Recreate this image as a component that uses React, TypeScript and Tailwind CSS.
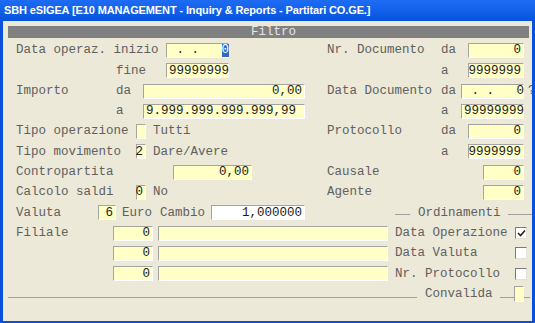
import React from 'react';

const mono = { fontFamily: '"Liberation Mono", "Courier New", monospace' };

function Field({ w, value = "", align = "right", white = false }: { w: string; value?: React.ReactNode; align?: "left" | "right"; white?: boolean }) {
  return (
    <div
      className={`${w} h-[15px] shrink-0 border-t border-l border-t-[#a6a59d] border-l-[#a6a59d] border-b border-r border-b-white border-r-white px-[2px] flex items-center whitespace-pre text-[#1c1c1c] leading-none ${align === "right" ? "justify-end" : "justify-start"} ${white ? "bg-white" : "bg-[#ffffc6]"}`}
    >
      {value}
    </div>
  );
}

function Lbl({ w, children }: { w: string; children?: React.ReactNode }) {
  return <div className={`${w} shrink-0 whitespace-pre text-[#606060] leading-none`}>{children}</div>;
}

function Check({ on = false }: { on?: boolean }) {
  return (
    <div className="w-[12px] h-[12px] shrink-0 bg-white border-t border-l border-t-[#7b7b7b] border-l-[#7b7b7b] border-b border-r border-b-[#e4e2d8] border-r-[#e4e2d8] flex items-center justify-center">
      {on && (
        <svg width="9" height="9" viewBox="0 0 9 9">
          <path d="M1 4 L3.5 6.5 L8 1.5" fill="none" stroke="#222" strokeWidth="1.6" />
        </svg>
      )}
    </div>
  );
}

export default function App() {
  return (
    <div className="w-[535px] h-[323px] bg-[#0a50dc] flex flex-col overflow-hidden">
      <div className="h-[21px] shrink-0 bg-gradient-to-b from-[#1e6cf4] to-[#0553de] flex items-center pl-[4px]">
        <span className="text-white font-bold text-[11px] tracking-[-0.12px] whitespace-nowrap" style={{ fontFamily: '"Liberation Sans", Arial, sans-serif' }}>
          SBH eSIGEA [E10 MANAGEMENT - Inquiry &amp; Reports - Partitari CO.GE.]
        </span>
      </div>
      <div className="flex-1 ml-[3px] mr-[3px] mb-[2px] bg-[#ece9d8] overflow-hidden text-[12.5px]" style={mono}>
        <div className="mt-[5px] ml-[5px] w-[521px] h-[12px] bg-[#808080] flex items-center justify-center pl-[10px] text-[#e6e6e6] leading-none">
          Filtro
        </div>

        <div className="mt-[5px] ml-[13px] flex flex-col gap-[5.3px]">
          {/* riga 1 */}
          <div className="h-[15px] flex items-center">
            <div className="w-[311px] shrink-0 flex items-center">
              <Lbl w="w-[150px]">Data operaz. inizio</Lbl>
              <Field
                w="w-[63px]"
                align="left"
                value={
                  <>
                    <span> . .   </span>
                    <span className="bg-[#316ac5] text-white">0</span>
                  </>
                }
              />
            </div>
            <Lbl w="w-[114px]">Nr. Documento</Lbl>
            <Lbl w="w-[27px]">da</Lbl>
            <Field w="w-[56px]" value="0" />
          </div>
          {/* riga 2 */}
          <div className="h-[15px] flex items-center">
            <div className="w-[311px] shrink-0 flex items-center">
              <Lbl w="w-[100px]" />
              <Lbl w="w-[50px]">fine</Lbl>
              <Field w="w-[63px]" align="left" value="99999999" />
            </div>
            <Lbl w="w-[114px]" />
            <Lbl w="w-[27px]">a</Lbl>
            <Field w="w-[56px]" value="9999999" />
          </div>
          {/* riga 3 */}
          <div className="h-[15px] flex items-center">
            <div className="w-[311px] shrink-0 flex items-center">
              <Lbl w="w-[100px]">Importo</Lbl>
              <Lbl w="w-[27px]">da</Lbl>
              <Field w="w-[162px]" value="0,00" />
            </div>
            <Lbl w="w-[114px]">Data Documento</Lbl>
            <Lbl w="w-[20px]">da</Lbl>
            <Field w="w-[63px]" align="left" value=" . .   0" />
            <span className="ml-[4px] shrink-0 text-[#5a5a5a] leading-none">?</span>
          </div>
          {/* riga 4 */}
          <div className="h-[15px] flex items-center">
            <div className="w-[311px] shrink-0 flex items-center">
              <Lbl w="w-[100px]" />
              <Lbl w="w-[27px]">a</Lbl>
              <Field w="w-[162px]" align="left" value="9.999.999.999.999,99" />
            </div>
            <Lbl w="w-[114px]" />
            <Lbl w="w-[20px]">a</Lbl>
            <Field w="w-[63px]" align="left" value="99999999" />
          </div>
          {/* riga 5 */}
          <div className="h-[15px] flex items-center">
            <div className="w-[311px] shrink-0 flex items-center">
              <Lbl w="w-[120px]">Tipo operazione</Lbl>
              <Field w="w-[10px]" />
              <Lbl w="w-[80px] ml-[7px]">Tutti</Lbl>
            </div>
            <Lbl w="w-[114px]">Protocollo</Lbl>
            <Lbl w="w-[27px]">da</Lbl>
            <Field w="w-[56px]" value="0" />
          </div>
          {/* riga 6 */}
          <div className="h-[15px] flex items-center">
            <div className="w-[311px] shrink-0 flex items-center">
              <Lbl w="w-[120px]">Tipo movimento</Lbl>
              <Field w="w-[10px]" value="2" />
              <Lbl w="w-[90px] ml-[7px]">Dare/Avere</Lbl>
            </div>
            <Lbl w="w-[114px]" />
            <Lbl w="w-[27px]">a</Lbl>
            <Field w="w-[56px]" value="9999999" />
          </div>
          {/* riga 7 */}
          <div className="h-[15px] flex items-center">
            <div className="w-[311px] shrink-0 flex items-center">
              <Lbl w="w-[157px]">Contropartita</Lbl>
              <Field w="w-[79px]" value="0,00" />
            </div>
            <Lbl w="w-[156px]">Causale</Lbl>
            <Field w="w-[41px]" value="0" />
          </div>
          {/* riga 8 */}
          <div className="h-[15px] flex items-center">
            <div className="w-[311px] shrink-0 flex items-center">
              <Lbl w="w-[120px]">Calcolo saldi</Lbl>
              <Field w="w-[10px]" value="0" />
              <Lbl w="w-[40px] ml-[7px]">No</Lbl>
            </div>
            <Lbl w="w-[156px]">Agente</Lbl>
            <Field w="w-[41px]" value="0" />
          </div>
          {/* riga 9 */}
          <div className="h-[15px] flex items-center">
            <div className="w-[311px] shrink-0 flex items-center">
              <Lbl w="w-[82px]">Valuta</Lbl>
              <Field w="w-[18px]" value="6" />
              <Lbl w="w-[38px] ml-[6px]">Euro</Lbl>
              <Lbl w="w-[51px]">Cambio</Lbl>
              <Field w="w-[94px]" white value="1,000000" />
            </div>
            <div className="ml-[68px] w-[15px] shrink-0 h-[1px] bg-[#a0a0a0] mt-[4px]" />
            <Lbl w="w-[90px] ml-[8px]">Ordinamenti</Lbl>
            <div className="w-[30px] shrink-0 h-[1px] bg-[#a0a0a0] mt-[4px]" />
          </div>
          {/* riga 10 */}
          <div className="h-[15px] flex items-center">
            <Lbl w="w-[97px]">Filiale</Lbl>
            <Field w="w-[40px]" value="0" />
            <div className="ml-[5px] shrink-0">
              <Field w="w-[230px]" />
            </div>
            <Lbl w="w-[120px] ml-[7px]">Data Operazione</Lbl>
            <Check on />
          </div>
          {/* riga 11 */}
          <div className="h-[15px] flex items-center">
            <Lbl w="w-[97px]" />
            <Field w="w-[40px]" value="0" />
            <div className="ml-[5px] shrink-0">
              <Field w="w-[230px]" />
            </div>
            <Lbl w="w-[120px] ml-[7px]">Data Valuta</Lbl>
            <Check />
          </div>
          {/* riga 12 */}
          <div className="h-[15px] flex items-center">
            <Lbl w="w-[97px]" />
            <Field w="w-[40px]" value="0" />
            <div className="ml-[5px] shrink-0">
              <Field w="w-[230px]" />
            </div>
            <Lbl w="w-[120px] ml-[7px]">Nr. Protocollo</Lbl>
            <Check />
          </div>
        </div>

        {/* convalida */}
        <div className="mt-[5px] ml-[5px] h-[16px] flex items-end">
          <div className="w-[409px] shrink-0 h-[1px] bg-[#a0a0a0] mb-[4px]" />
          <Lbl w="w-[75px] ml-[8px] self-center">Convalida</Lbl>
          <div className="w-[14px] shrink-0 h-[1px] bg-[#a0a0a0] mb-[4px]" />
          <div className="w-[10px] shrink-0 h-[16px] bg-[#ffffc6] border-t border-l border-t-[#a6a59d] border-l-[#a6a59d] border-b border-r border-b-white border-r-white" />
          <div className="w-[6px] shrink-0 h-[1px] bg-[#a0a0a0] mb-[4px]" />
        </div>
      </div>
    </div>
  );
}
